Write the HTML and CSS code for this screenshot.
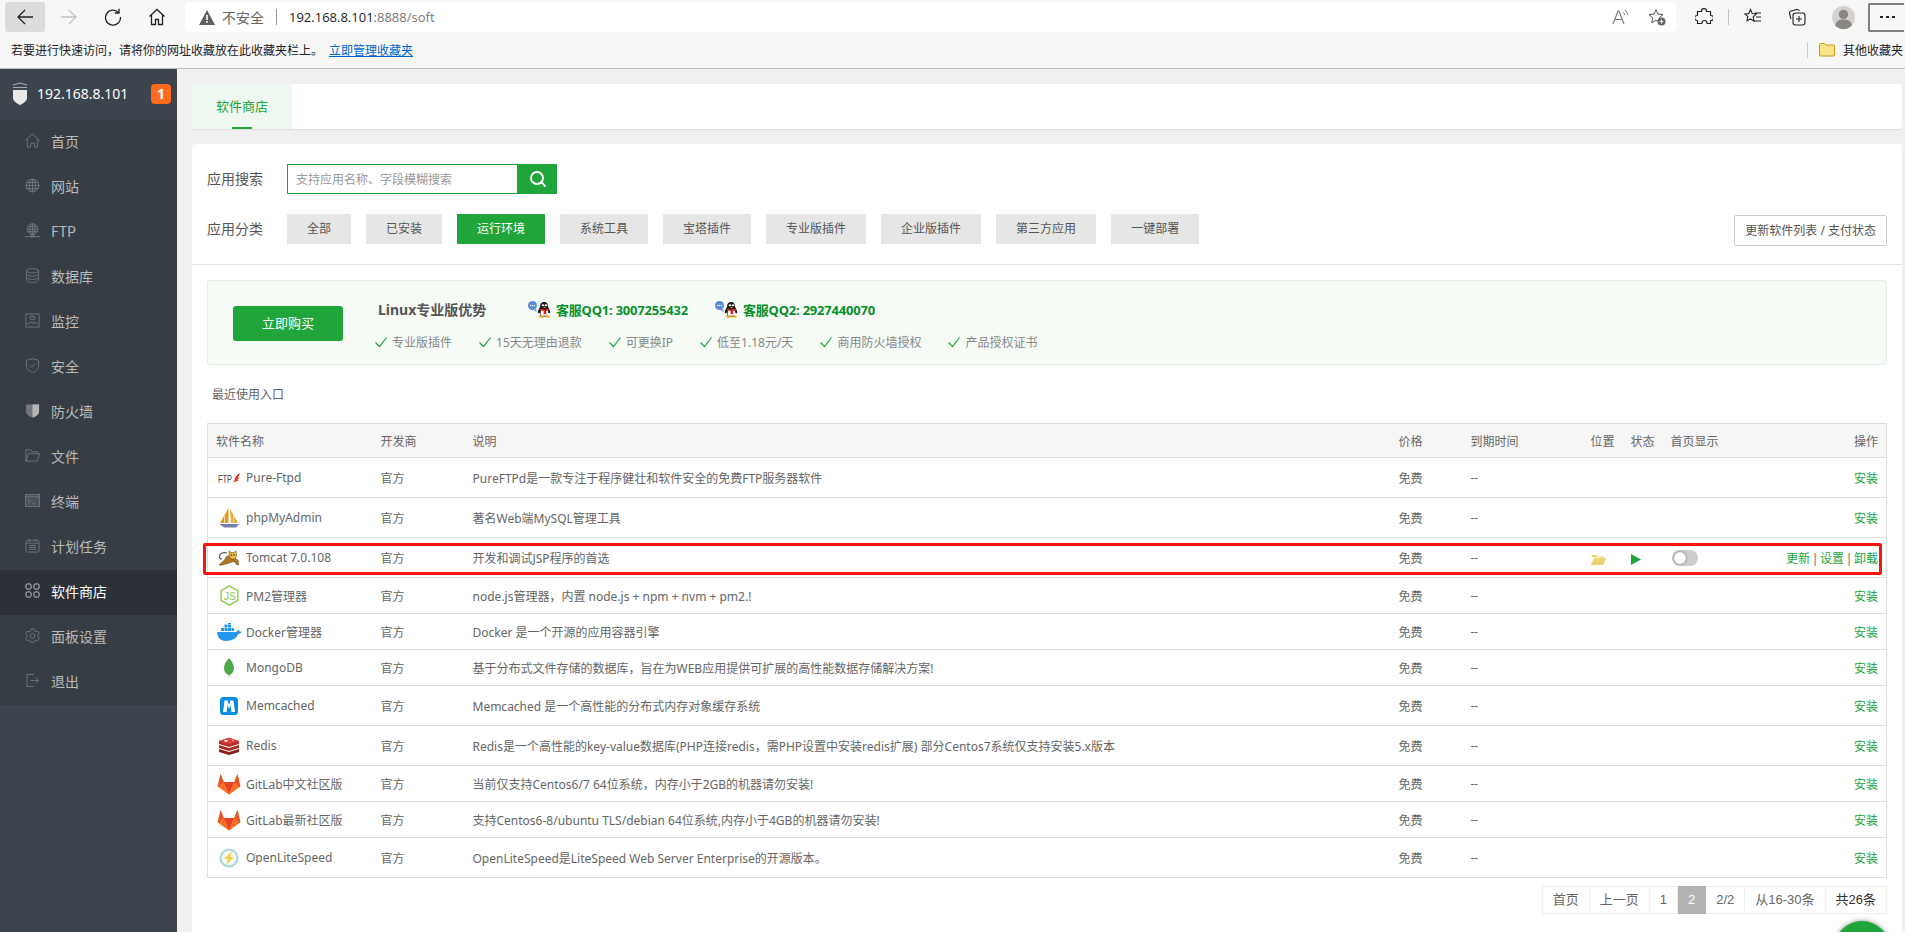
FILE: index.html
```html
<!DOCTYPE html>
<html lang="zh">
<head>
    <meta charset="utf-8">
    <title>软件商店</title>
    <link rel="stylesheet" href="styles.css">
</head>
<body>
    <svg class="defs" width="0" height="0">
        <symbol id="gitlab" viewBox="0 0 24 22">
            <path d="M12 21.500 0.600 13.200 3.600 1l3.200 8h10.400l3.200-8 3 12.200z" fill="#fca326"/>
            <path d="M12 21.500 6.800 9h10.400z" fill="#e24329"/>
            <path d="M6.800 9 3.600 1 0.600 13.200 2 14.200z" fill="#e8552a"/>
            <path d="M17.200 9 20.400 1l3 12.200-1.400 1z" fill="#e8552a"/>
            <path d="M12 21.500 2 14.200 6.800 9zM12 21.500 22 14.200 17.200 9z" fill="#fc6d26"/>
        </symbol>
        <symbol id="qq" viewBox="0 0 24 17">
            <circle cx="4.500" cy="4.500" r="4.500" fill="#5b8bd8"/>
            <path d="M5 8.500l3.500 0 0 2.500z" fill="#5b8bd8"/>
            <circle cx="2.600" cy="4.500" r=".7" fill="#fff"/><circle cx="4.500" cy="4.500" r=".7" fill="#fff"/><circle cx="6.400" cy="4.500" r=".7" fill="#fff"/>
            <g transform="translate(1.600 -.44) scale(.875 .72)">
                <path d="M17 2c-3.600 0-5 3-5 6 0 2-3 6-2.500 9 .5 1.500 2 0 2.500-.5V22h9v-5.500c.5.500 2 2 2.500.5.500-3-2.500-7-2.500-9 0-3-1.400-6-4-6z" fill="#1a1a1a"/>
                <path d="M13 12c2 1.500 6 1.500 8 0l.5 9h-9z" fill="#fff"/>
                <path d="M12 11.500c3 1.500 7 1.500 10 0v2c-1 .5-2 .8-3 .8V19h-3v-4.700c-1.500 0-3-.3-4-.8z" fill="#e0201c"/>
                <path d="M11 21h5v2.500h-5zM18 21h5v2.500h-5z" fill="#f0a010"/>
                <circle cx="15.300" cy="6.500" r="1.500" fill="#fff"/><circle cx="18.700" cy="6.500" r="1.500" fill="#fff"/>
                <path d="M15 9h4l-2 1.800z" fill="#f0a010"/>
            </g>
        </symbol>
        <symbol id="check" viewBox="0 0 14 14">
            <path d="M1.500 7.500 5.500 11.500 12.500 2.500" fill="none" stroke="#20a53a" stroke-width="1.200"/>
        </symbol>
    </svg>

    <header class="browser">
        <div class="toolbar">
            <div class="tool tool-back">
                <svg width="18" height="18" viewBox="0 0 18 18"><path d="M17 9H2M9 2 2 9l7 7" fill="none" stroke="#222" stroke-width="1.300"/></svg>
            </div>
            <div class="tool">
                <svg width="18" height="18" viewBox="0 0 18 18"><path d="M1 9h15M9 2l7 7-7 7" fill="none" stroke="#c4c4c4" stroke-width="1.300"/></svg>
            </div>
            <div class="tool">
                <svg width="18" height="18" viewBox="0 0 18 18"><path d="M14.500 4.500A7.500 7.500 0 1 0 16.500 9M15 .8v4.200h-4.200" fill="none" stroke="#222" stroke-width="1.300"/></svg>
            </div>
            <div class="tool">
                <svg width="18" height="18" viewBox="0 0 18 18"><path d="M1.500 8.500 9 1.500l7.500 7M3.500 7v9.500h4v-5h3v5h4V7" fill="none" stroke="#222" stroke-width="1.300"/></svg>
            </div>
            <div class="address">
                <svg class="warn" width="16" height="15" viewBox="0 0 16 15"><path d="M8 0 16 15H0z" fill="#5f5f5f"/><path d="M7.200 5h1.600v5H7.200zM7.200 11h1.600v1.700H7.200z" fill="#fff"/></svg>
                <span class="insecure">不安全</span>
                <span class="address-sep"></span>
                <span class="url">192.168.8.101<span class="url-dim">:8888/soft</span></span>
                <svg class="read-icon" width="18" height="16" viewBox="0 0 18 16"><path d="M1 15 6 2h1l5 13M3 10.500h7" fill="none" stroke="#777" stroke-width="1.100"/><path d="M11 3c1 .7 1.500 1.700 1.500 3M13 1c1.700 1.100 2.500 3 2.500 5" fill="none" stroke="#777"/></svg>
                <svg class="star-icon" width="18" height="18" viewBox="0 0 18 18"><path d="M8 1.500l2 4.600 5 .5-3.700 3.300 1 4.900L8 12.300l-4.300 2.500 1-4.900L1 6.600l5-.5z" fill="none" stroke="#555"/><circle cx="13.500" cy="13.500" r="4" fill="#666"/><path d="M11.500 13.500h4M13.500 11.500v4" stroke="#fff"/></svg>
            </div>
            <div class="tool tool-first">
                <svg width="18" height="18" viewBox="0 0 18 18"><path d="M6.500 3.200a2.500 2.500 0 0 1 5 0c0 .3 0 .3.300.3h3.700v3.700c0 .3.200.3.500.3a2.500 2.500 0 0 1 0 5c-.3 0-.5 0-.5.300v2.700h-3.200c-.3 0-.3-.2-.3-.5a2.500 2.500 0 0 0-5 0c0 .3 0 .5-.3.500H2.500v-2.700c0-.3-.2-.3-.5-.3a2.500 2.500 0 0 1 0-5c.3 0 .5 0 .5-.3V3.500h3.700c.3 0 .3 0 .3-.3z" fill="none" stroke="#222" stroke-width="1.200"/></svg>
            </div>
            <span class="tool-sep"></span>
            <div class="tool">
                <svg width="18" height="18" viewBox="0 0 18 18"><path d="M6.500 1.500l1.700 4 4 .5-3 2.900.8 4.300-3.500-2.200L3 12.700l.8-4.300L.8 6l4-.5zM11 5h6M12 9h5M10.500 13H17" fill="none" stroke="#222" stroke-width="1.100"/></svg>
            </div>
            <div class="tool">
                <svg width="18" height="18" viewBox="0 0 18 18"><path d="M3 11 1.500 5.500A2 2 0 0 1 3 3l6-1.500c1-.2 2 .3 2.300 1.500" fill="none" stroke="#222" stroke-width="1.100"/><rect x="5" y="5" width="12" height="12" rx="2.500" fill="none" stroke="#222" stroke-width="1.100"/><path d="M11 8v6M8 11h6" stroke="#222" stroke-width="1.100"/></svg>
            </div>
            <div class="tool tool-user">
                <div class="avatar">
                    <svg width="23" height="23" viewBox="0 0 22 22"><circle cx="11" cy="8" r="4.500" fill="#8a8682"/><path d="M3 19c1-5 4-6 8-6s7 1 8 6a11 11 0 0 1-16 0z" fill="#8a8682"/></svg>
                </div>
            </div>
            <div class="more"><i></i><i></i><i></i></div>
        </div>
        <div class="bookmarks">
            <span>若要进行快速访问，请将你的网址收藏放在此收藏夹栏上。</span>
            <a class="bookmarks-link" href="#">立即管理收藏夹</a>
            <span class="bookmarks-sep"></span>
            <svg width="16" height="14" viewBox="0 0 16 14"><path d="M.5 12V1.500a1 1 0 0 1 1-1h4l1.500 1.500h7.500a1 1 0 0 1 1 1V12a1 1 0 0 1-1 1h-13a1 1 0 0 1-1-1z" fill="#fbe38a" stroke="#c79a10"/></svg>
            <span class="bookmarks-other">其他收藏夹</span>
        </div>
    </header>

    <div class="app">
        <aside class="sidebar">
            <div class="side-head">
                <svg width="16" height="24" viewBox="0 0 16 24"><path d="M1 3l7-2 7 2M1 5.500h14" fill="none" stroke="#aab" stroke-width="1.200"/><path d="M1 8h14v8c0 3-4 5.500-7 7-3-1.500-7-4-7-7z" fill="#e8e8e8"/></svg>
                <span class="side-ip">192.168.8.101</span>
                <span class="side-badge">1</span>
            </div>
            <nav class="side-nav">
                <a class="side-item" href="#">
                    <svg viewBox="0 0 16 16"><path d="M.5 8 8 1l7.500 7M2.500 7v8h3.500v-4h4v4h3.500V7"/></svg>首页
                </a>
                <a class="side-item" href="#">
                    <svg viewBox="0 0 16 16"><circle cx="8" cy="8" r="6.800"/><ellipse cx="8" cy="8" rx="3.200" ry="6.800"/><path d="M8 1.200v13.600M1.200 8h13.600M2 4.800h12M2 11.200h12"/></svg>网站
                </a>
                <a class="side-item" href="#">
                    <svg viewBox="0 0 16 16"><circle cx="8" cy="6.500" r="5.700"/><ellipse cx="8" cy="6.500" rx="2.600" ry="5.700"/><path d="M8 1v11M2.300 6.500h11.400M3 3.800h10M3 9.200h10M0 14.500h16M6 13h4v2H6z"/></svg>FTP
                </a>
                <a class="side-item" href="#">
                    <svg viewBox="0 0 16 16"><ellipse cx="8" cy="3" rx="6.500" ry="2.300"/><path d="M1.500 3v10c0 1.300 3 2.300 6.500 2.300s6.500-1 6.500-2.300V3M1.500 6.400c0 1.300 3 2.300 6.500 2.300s6.500-1 6.500-2.300M1.500 9.800c0 1.300 3 2.300 6.500 2.300s6.500-1 6.500-2.300"/></svg>数据库
                </a>
                <a class="side-item" href="#">
                    <svg viewBox="0 0 16 16"><rect x="1" y="1" width="14" height="14"/><path d="M2 11h3l1.500-2 1.500 2.500L9.500 9l1 2H14M5.500 3.500h5v3h-5z"/></svg>监控
                </a>
                <a class="side-item" href="#">
                    <svg viewBox="0 0 16 16"><path d="M8 .8 14.500 2.500V9c0 3-3.500 5.500-6.500 6.500C5 14.500 1.500 12 1.500 9V2.500zM4.800 7.500l2.400 2.400 4-4"/></svg>安全
                </a>
                <a class="side-item" href="#">
                    <svg viewBox="0 0 16 16"><path class="fill-half" d="M1 1.500h14V9c0 3-3.500 5.500-7 6.500C4.500 14.500 1 12 1 9z"/><path class="fill-solid" d="M8 1.500h7V9c0 3-3.500 5.500-7 6.500z"/></svg>防火墙
                </a>
                <a class="side-item" href="#">
                    <svg viewBox="0 0 16 16"><path d="M1 14V2h5l1.500 2h6v2M1 14l2.500-8h12L13 14z"/></svg>文件
                </a>
                <a class="side-item" href="#">
                    <svg viewBox="0 0 16 16"><rect x=".5" y="1.500" width="15" height="13" class="fill-dim"/><path d="M.5 4h15M3 7l3 2-3 2M7.500 11.500h4"/></svg>终端
                </a>
                <a class="side-item" href="#">
                    <svg viewBox="0 0 16 16"><rect x="1" y="2.500" width="14" height="12.500" rx="1.500"/><path d="M1 5.500h14M4.500 .8v3M11.500 .8v3M4 8h8M4 10h8M4 12h8"/></svg>计划任务
                </a>
                <a class="side-item side-item-active" href="#">
                    <svg viewBox="0 0 16 16"><rect x="1" y="1" width="5.500" height="5.500" rx="1.500"/><rect x="9.500" y="1" width="5.500" height="5.500" rx="1.500"/><rect x="1" y="9.500" width="5.500" height="5.500" rx="1.500"/><rect x="9.500" y="9.500" width="5.500" height="5.500" rx="1.500"/></svg>软件商店
                </a>
                <a class="side-item" href="#">
                    <svg viewBox="0 0 16 16"><path d="M6.500 1h3l.5 2 1.800 1 2-.6 1.500 2.600-1.500 1.500v1.800l1.500 1.500-1.500 2.600-2-.6-1.800 1-.5 2h-3l-.5-2-1.800-1-2 .6L.7 10.800l1.500-1.500V7.500L.7 6 2.200 3.400l2 .6L6 3z"/><circle cx="8" cy="8.400" r="2.500"/></svg>面板设置
                </a>
                <a class="side-item" href="#">
                    <svg viewBox="0 0 16 16"><path d="M9.500 1.500h-7.500v13h7.500M6 8h8.500M11.500 5l3 3-3 3"/></svg>退出
                </a>
            </nav>
        </aside>

        <main class="main">
            <div class="tabs">
                <div class="tab">软件商店</div>
            </div>

            <section class="store">
                <div class="filters">
                    <div class="filter-row">
                        <span class="filter-label">应用搜索</span>
                        <div class="search">
                            <input class="search-input" type="text" placeholder="支持应用名称、字段模糊搜索">
                            <span class="search-btn">
                                <svg width="18" height="18" viewBox="0 0 18 18"><circle cx="8" cy="8" r="6" fill="none" stroke="#fff" stroke-width="1.800"/><path d="M12.500 12.500 16.500 16.500" stroke="#fff" stroke-width="1.800"/></svg>
                            </span>
                        </div>
                    </div>
                    <div class="filter-row filter-row-cats">
                        <span class="filter-label">应用分类</span>
                        <span class="cat">全部</span>
                        <span class="cat">已安装</span>
                        <span class="cat cat-active">运行环境</span>
                        <span class="cat">系统工具</span>
                        <span class="cat">宝塔插件</span>
                        <span class="cat">专业版插件</span>
                        <span class="cat">企业版插件</span>
                        <span class="cat">第三方应用</span>
                        <span class="cat">一键部署</span>
                        <span class="refresh">更新软件列表 / 支付状态</span>
                    </div>
                </div>

                <div class="content">
                    <div class="promo">
                        <a class="buy" href="#">立即购买</a>
                        <div class="promo-body">
                            <div class="promo-top">
                                <span class="promo-title">Linux专业版优势</span>
                                <span class="qq"><svg width="24" height="17"><use href="#qq"/></svg>客服QQ1: 3007255432</span>
                                <span class="qq"><svg width="24" height="17"><use href="#qq"/></svg>客服QQ2: 2927440070</span>
                            </div>
                            <div class="promo-features">
                                <span class="feature"><svg width="14" height="14"><use href="#check"/></svg>专业版插件</span>
                                <span class="feature"><svg width="14" height="14"><use href="#check"/></svg>15天无理由退款</span>
                                <span class="feature"><svg width="14" height="14"><use href="#check"/></svg>可更换IP</span>
                                <span class="feature"><svg width="14" height="14"><use href="#check"/></svg>低至1.18元/天</span>
                                <span class="feature"><svg width="14" height="14"><use href="#check"/></svg>商用防火墙授权</span>
                                <span class="feature"><svg width="14" height="14"><use href="#check"/></svg>产品授权证书</span>
                            </div>
                        </div>
                    </div>

                    <div class="recent">最近使用入口</div>

                    <div class="table-wrap">
                        <table class="soft-table">
                            <colgroup>
                                <col class="col-name"><col class="col-dev"><col class="col-desc"><col class="col-price">
                                <col class="col-expire"><col class="col-loc"><col class="col-state"><col class="col-home"><col class="col-op">
                            </colgroup>
                            <thead>
                                <tr>
                                    <th>软件名称</th><th>开发商</th><th>说明</th><th>价格</th><th>到期时间</th><th>位置</th><th>状态</th><th>首页显示</th><th class="op">操作</th>
                                </tr>
                            </thead>
                            <tbody>
                                <tr class="row-tall">
                                    <td><div class="soft"><span class="logo"><svg width="24" height="14" viewBox="0 0 24 14"><text x="1" y="11.500" class="ftp-text" textLength="14" lengthAdjust="spacingAndGlyphs">FTP</text><path d="M23 2c-2.500 1-5 4-5.500 7l-1.500 3 2-1.500c2.500 0 3.500-1.500 3.500-1.500h-1.500l2.500-2h-1.500z" fill="#d8352a"/></svg></span>Pure-Ftpd</div></td>
                                    <td>官方</td><td>PureFTPd是一款专注于程序健壮和软件安全的免费FTP服务器软件</td><td>免费</td><td>--</td><td></td><td></td><td></td><td class="op"><a class="link" href="#">安装</a></td>
                                </tr>
                                <tr class="row-tall">
                                    <td><div class="soft"><span class="logo"><svg width="20" height="20" viewBox="0 0 20 20"><path d="M9.500 0 1 15h8.500z" fill="#e39c26"/><path d="M11 1l8 14h-7z" fill="#e8aa3c"/><path d="M5 8h1v7H5zM14 6h1v9h-1z" fill="#f4d9a0"/><path d="M0 16h20l-3 3.500H5z" fill="#7a7fa8"/></svg></span>phpMyAdmin</div></td>
                                    <td>官方</td><td>著名Web端MySQL管理工具</td><td>免费</td><td>--</td><td></td><td></td><td></td><td class="op"><a class="link" href="#">安装</a></td>
                                </tr>
                                <tr class="row-tall">
                                    <td><div class="soft"><span class="logo"><svg width="22" height="16" viewBox="0 0 22 16"><path d="M9 3C5 2 1.500 3.500 1.500 6.500c0 1.500 1 2.500 2.500 2.500" fill="none" stroke="#555" stroke-width="1.200"/><path d="M1 15l5-4.500 3-4.500 5 1 6 3 .5 5-2-.5-2-3-4 1-5 1.500-3 1z" fill="#b07a20" stroke="#4a3a10" stroke-width=".5"/><path d="M11 1l2 1.500h3L18 1l.5 5-1.500 3h-4l-2-3z" fill="#f0c040" stroke="#6a4a10" stroke-width=".6"/><circle cx="13.500" cy="5" r=".8" fill="#222"/><circle cx="16" cy="5" r=".8" fill="#222"/></svg></span>Tomcat 7.0.108</div></td>
                                    <td>官方</td><td>开发和调试JSP程序的首选</td><td>免费</td><td>--</td>
                                    <td><svg class="folder" width="15" height="11" viewBox="0 0 15 11"><path d="M1 3V1h4.500l1 1.500H13V4H3.500L0 11h12l3-7" fill="#eed46c"/><path d="M3 4h12l-3 7H0z" fill="#eed46c"/></svg></td>
                                    <td><svg class="play" width="10" height="11" viewBox="0 0 10 11"><path d="M0 0 10 5.500 0 11z" fill="#20a53a"/></svg></td>
                                    <td><span class="switch"><i></i></span></td>
                                    <td class="op"><a class="link" href="#">更新</a> | <a class="link" href="#">设置</a> | <a class="link" href="#">卸载</a></td>
                                </tr>
                                <tr>
                                    <td><div class="soft"><span class="logo"><svg width="19" height="21" viewBox="0 0 18 20"><path d="M9 .8 17 5.300v9.400L9 19.200 1 14.700V5.300z" fill="none" stroke="#8cc84b" stroke-width="1.300"/><text x="3.500" y="14" class="js-text">JS</text></svg></span>PM2管理器</div></td>
                                    <td>官方</td><td>node.js管理器，内置 node.js + npm + nvm + pm2.!</td><td>免费</td><td>--</td><td></td><td></td><td></td><td class="op"><a class="link" href="#">安装</a></td>
                                </tr>
                                <tr>
                                    <td><div class="soft"><span class="logo"><svg width="25" height="18" viewBox="0 0 25 18"><path d="M0 9h19c1-.2 1.500-1 1.500-2 1 .2 2 .8 2.300 1.500l2 .3c-1 1.500-2 2-3.500 2C20 15 15 18 9 18 3 18 .5 14 0 9z" fill="#2496ed"/><path d="M4 5h3v3H4zM7.500 5h3v3h-3zM11 5h3v3h-3zM14.500 5h2.500v3h-2.500zM7.500 1.500h3v3h-3zM11 1.500h3v3h-3zM11-1h3v2h-3z" fill="#2496ed"/></svg></span>Docker管理器</div></td>
                                    <td>官方</td><td>Docker 是一个开源的应用容器引擎</td><td>免费</td><td>--</td><td></td><td></td><td></td><td class="op"><a class="link" href="#">安装</a></td>
                                </tr>
                                <tr>
                                    <td><div class="soft"><span class="logo"><svg width="10" height="20" viewBox="0 0 10 20"><path d="M5 0c2.500 3 5 6 5 10s-2.500 6-4.500 7L5 20l-.5-3C2.500 16 0 14 0 10S2.500 3 5 0z" fill="#4fa94a"/></svg></span>MongoDB</div></td>
                                    <td>官方</td><td>基于分布式文件存储的数据库，旨在为WEB应用提供可扩展的高性能数据存储解决方案!</td><td>免费</td><td>--</td><td></td><td></td><td></td><td class="op"><a class="link" href="#">安装</a></td>
                                </tr>
                                <tr class="row-tall">
                                    <td><div class="soft"><span class="logo"><svg width="18" height="18" viewBox="0 0 18 18"><rect width="18" height="18" rx="3.500" fill="#0a8ee0"/><path d="M3 15 4.500 3.500h3L9 8l1.500-4.500h3L15 15h-3.500L10.500 8 9 12 7.500 8l-1 7z" fill="#fff"/></svg></span>Memcached</div></td>
                                    <td>官方</td><td>Memcached 是一个高性能的分布式内存对象缓存系统</td><td>免费</td><td>--</td><td></td><td></td><td></td><td class="op"><a class="link" href="#">安装</a></td>
                                </tr>
                                <tr class="row-tall">
                                    <td><div class="soft"><span class="logo"><svg width="20" height="18" viewBox="0 0 20 18"><path d="M0 12v3l10 3 10-3v-3l-10 3z" fill="#8f1f1a"/><path d="M0 8v3l10 3 10-3V8l-10 3z" fill="#a82a22"/><path d="M0 4v3l10 3 10-3V4L10 1z" fill="#b8302a"/><path d="M0 4l10-3.500L20 4l-10 3z" fill="#d9443a"/><ellipse cx="7" cy="3.800" rx="2" ry=".9" fill="#fff"/><path d="M12 2l1 1 2-.5-1 1.500z" fill="#fff"/></svg></span>Redis</div></td>
                                    <td>官方</td><td>Redis是一个高性能的key-value数据库(PHP连接redis，需PHP设置中安装redis扩展) 部分Centos7系统仅支持安装5.x版本</td><td>免费</td><td>--</td><td></td><td></td><td></td><td class="op"><a class="link" href="#">安装</a></td>
                                </tr>
                                <tr>
                                    <td><div class="soft"><span class="logo"><svg width="24" height="22"><use href="#gitlab"/></svg></span>GitLab中文社区版</div></td>
                                    <td>官方</td><td>当前仅支持Centos6/7 64位系统，内存小于2GB的机器请勿安装!</td><td>免费</td><td>--</td><td></td><td></td><td></td><td class="op"><a class="link" href="#">安装</a></td>
                                </tr>
                                <tr>
                                    <td><div class="soft"><span class="logo"><svg width="24" height="22"><use href="#gitlab"/></svg></span>GitLab最新社区版</div></td>
                                    <td>官方</td><td>支持Centos6-8/ubuntu TLS/debian 64位系统,内存小于4GB的机器请勿安装!</td><td>免费</td><td>--</td><td></td><td></td><td></td><td class="op"><a class="link" href="#">安装</a></td>
                                </tr>
                                <tr class="row-tall">
                                    <td><div class="soft"><span class="logo"><svg width="20" height="20" viewBox="0 0 20 20"><circle cx="10" cy="10" r="8.500" fill="#f2f8f8" stroke="#a9d6d6" stroke-width="2"/><path d="M13 3 5 11h4l-2 6 8-8h-4z" fill="#f4d03f"/></svg></span>OpenLiteSpeed</div></td>
                                    <td>官方</td><td>OpenLiteSpeed是LiteSpeed Web Server Enterprise的开源版本。</td><td>免费</td><td>--</td><td></td><td></td><td></td><td class="op"><a class="link" href="#">安装</a></td>
                                </tr>
                            </tbody>
                        </table>
                        <div class="mark"></div>
                    </div>

                    <div class="pager">
                        <a href="#">首页</a><a href="#">上一页</a><a href="#">1</a><span class="pager-on">2</span><span>2/2</span><span>从16-30条</span><span class="pager-total">共26条</span>
                    </div>
                </div>
            </section>
            <div class="float-btn"></div>
        </main>
    </div>
</body>
</html>
```
FILE: styles.css
```css
/* page base */
* {
    box-sizing: border-box;
}

html, body {
    height: 100%;
}

body {
    margin: 0;
    height: 932px;
    overflow: hidden;
    display: flex;
    flex-direction: column;
    font-family: "Noto Sans", "Noto Sans CJK SC", sans-serif;
    font-size: 12px;
    color: #666;
    background-color: #f0f0f0;
}

a {
    text-decoration: none;
}

.defs {
    position: absolute;
}

/* browser bars */
.browser {
    flex: none;
    height: 69px;
    background-color: #f7f7f7;
    border-bottom: 1px solid #bdbdbd;
}

.toolbar {
    display: flex;
    align-items: center;
    height: 34px;
    padding: 2px 0 2px 5px;
}

.tool {
    width: 44px;
    height: 30px;
    display: flex;
    align-items: center;
    justify-content: center;
    flex: none;
}

.tool-back {
    width: 40px;
    margin-right: 2px;
    background-color: #dcdcdc;
    border-radius: 3px;
}

.tool-first {
    margin-left: 6px;
}

.tool-user {
    margin-left: 2px;
}

.tool-sep {
    width: 1px;
    height: 16px;
    margin: 0 2px;
    background-color: #c4c4c4;
}

.address {
    flex: none;
    width: 1491px;
    height: 30px;
    margin-left: 6px;
    padding: 0 10px 0 14px;
    display: flex;
    align-items: center;
    background-color: #fff;
    border-radius: 5px;
    font-family: "Open Sans", "Noto Sans CJK SC", sans-serif;
    font-size: 13px;
}

.insecure {
    margin-left: 7px;
    font-size: 14px;
    color: #666;
}

.address-sep {
    width: 1px;
    height: 16px;
    margin: 0 12px;
    background-color: #999;
}

.url {
    color: #222;
}

.url-dim {
    color: #777;
}

.read-icon {
    margin-left: auto;
    margin-right: 18px;
}

.avatar {
    width: 23px;
    height: 23px;
    border-radius: 50%;
    overflow: hidden;
    background-color: #d4d2d0;
}

.more {
    width: 36px;
    height: 29px;
    margin-left: 3px;
    display: flex;
    align-items: center;
    justify-content: center;
    gap: 3px;
    border: 2px solid #808080;
    border-right: 0;
    border-radius: 2px 0 0 2px;
}

.more i {
    width: 3px;
    height: 2px;
    background-color: #222;
}

.bookmarks {
    display: flex;
    align-items: center;
    height: 34px;
    padding: 0 2px 3px 11px;
    color: #222;
    font-family: "Noto Sans CJK SC", sans-serif;
    font-size: 12px;
}

.bookmarks-link {
    margin-left: 6px;
    color: #0066cc;
    text-decoration: underline;
}

.bookmarks-sep {
    width: 1px;
    height: 16px;
    margin-left: auto;
    margin-right: 11px;
    background-color: #ccc;
}

.bookmarks-other {
    margin-left: 8px;
}

/* sidebar */
.app {
    flex: 1;
    display: flex;
    min-height: 0;
}

.sidebar {
    flex: none;
    width: 177px;
    background-color: #3c444d;
    color: #bbb;
}

.side-head {
    height: 51px;
    display: flex;
    align-items: center;
    padding: 0 6px 2px 12px;
    color: #fff;
    font-size: 14px;
}

.side-ip {
    margin-left: 9px;
}

.side-badge {
    width: 20px;
    height: 20px;
    margin-left: auto;
    border-radius: 4px;
    background-color: #ff6a1f;
    font-weight: bold;
    line-height: 20px;
    text-align: center;
}

.side-nav {
    background-color: #363d44;
}

.side-item {
    display: flex;
    align-items: center;
    height: 45px;
    padding: 0 0 4px 25px;
    color: #bbb;
    font-family: "Noto Sans CJK SC", sans-serif;
    font-size: 14px;
}

.side-item svg {
    width: 15px;
    height: 15px;
    margin-right: 11px;
    flex: none;
    fill: none;
    stroke: #6f767d;
    stroke-width: 1;
}

.side-item-active {
    background-color: #2c3138;
    color: #fff;
}

.side-item-active svg {
    stroke: #cfcfcf;
}

.side-item .fill-half {
    fill: #6f767d;
    stroke: none;
}

.side-item .fill-solid {
    fill: #b5b5b5;
    stroke: none;
}

.side-item .fill-dim {
    fill: #4b5258;
}

/* main column */
.main {
    position: relative;
    flex: 1;
    min-width: 0;
    display: flex;
    flex-direction: column;
    padding: 15px 3px 0 15px;
}

.tabs {
    flex: none;
    height: 45px;
    background-color: #fff;
    border-radius: 4px;
    box-shadow: 0 1px 1px #ddd;
}

.tab {
    position: relative;
    width: 100px;
    height: 45px;
    line-height: 45px;
    text-align: center;
    font-size: 13px;
    color: #20a53a;
    background-color: #eef7f0;
    border-radius: 4px 0 0 4px;
}

.tab::after {
    content: "";
    position: absolute;
    left: 40px;
    bottom: 0;
    width: 20px;
    height: 2px;
    background-color: #20a53a;
}

.store {
    flex: 1;
    margin-top: 15px;
    background-color: #fff;
    border-radius: 4px 4px 0 0;
}

.filters {
    height: 121px;
    padding: 20px 15px 0;
    border-bottom: 1px solid #e4e4e4;
}

.filter-row {
    display: flex;
    align-items: center;
}

.filter-row-cats {
    margin-top: 20px;
    gap: 15px;
    align-items: flex-start;
}

.filter-label {
    width: 80px;
    flex: none;
    font-size: 14px;
    line-height: 30px;
    color: #555;
}

.filter-row-cats .filter-label {
    width: 65px;
}

.search {
    display: flex;
    height: 30px;
}

.search-input {
    width: 231px;
    height: 30px;
    padding: 0 8px;
    border: 1px solid #20a53a;
    outline: 0;
    font: inherit;
}

.search-input::placeholder {
    color: #999;
}

.search-btn {
    width: 39px;
    display: flex;
    align-items: center;
    justify-content: center;
    background-color: #20a53a;
}

.cat {
    height: 30px;
    padding: 0 20px;
    line-height: 30px;
    color: #555;
    background-color: #e6e6e6;
    white-space: nowrap;
}

.cat-active {
    color: #fff;
    background-color: #20a53a;
}

.refresh {
    height: 31px;
    margin: 1px 0 0 auto;
    padding: 0 10px;
    line-height: 29px;
    color: #555;
    border: 1px solid #ccc;
    border-radius: 2px;
}

.content {
    padding: 15px 15px 0;
}

/* promo banner */
.promo {
    display: flex;
    height: 85px;
    background-color: #f6fbf6;
    border: 1px solid #e3efe8;
    border-radius: 3px;
}

.buy {
    width: 110px;
    height: 35px;
    margin: 25px 35px 0 25px;
    line-height: 35px;
    text-align: center;
    font-size: 13px;
    color: #fff;
    background-color: #20a53a;
    border-radius: 3px;
}

.promo-top {
    display: flex;
    align-items: center;
    height: 28px;
    margin-top: 14px;
}

.promo-title {
    width: 150px;
    font-size: 14px;
    font-weight: bold;
    color: #555;
}

.qq {
    display: flex;
    align-items: center;
    gap: 4px;
    width: 187px;
    font-size: 13px;
    font-weight: bold;
    letter-spacing: -0.2px;
    color: #0a8f2a;
}

.promo-features {
    display: flex;
    gap: 26px;
    margin: 10px 0 0 -4px;
}

.feature {
    display: flex;
    align-items: center;
    gap: 4px;
    color: #888;
}

/* software table */
.recent {
    margin: 21px 0 19px 5px;
    height: 18px;
    line-height: 18px;
    color: #666;
}

.table-wrap {
    position: relative;
}

.soft-table {
    width: 100%;
    table-layout: fixed;
    border-collapse: collapse;
    border: 1px solid #ddd;
}

.soft-table th,
.soft-table td {
    padding: 0 8px;
    text-align: left;
    font-weight: normal;
    color: #666;
    white-space: nowrap;
}

.soft-table th {
    height: 34px;
    background-color: #f6f6f6;
    border-bottom: 1px solid #ddd;
}

.soft-table td {
    height: 36px;
    border-bottom: 1px solid #ddd;
}

.soft-table .row-tall td {
    height: 40px;
}

.soft-table .op {
    text-align: right;
    word-spacing: -1.5px;
}

.col-name { width: 165px; }
.col-dev { width: 92px; }
.col-desc { width: 926px; }
.col-price { width: 72px; }
.col-expire { width: 120px; }
.col-loc { width: 40px; }
.col-state { width: 40px; }
.col-home { width: 108px; }

.soft {
    display: flex;
    align-items: center;
    gap: 4px;
}

.logo {
    width: 26px;
    display: flex;
    justify-content: center;
}

.ftp-text {
    font-family: "Liberation Sans", sans-serif;
    font-size: 11px;
    fill: #444;
}

.js-text {
    font-family: "Liberation Sans", sans-serif;
    font-size: 10px;
    fill: #8cc84b;
}

.link {
    color: #20a53a;
}

.folder,
.play {
    display: block;
    margin-top: 4px;
}

.switch {
    display: block;
    width: 26px;
    height: 16px;
    margin: 0 0 0 1px;
    padding: 2px;
    background-color: #ccc;
    border-radius: 8px;
}

.switch i {
    display: block;
    width: 12px;
    height: 12px;
    background-color: #fff;
    border-radius: 50%;
    box-shadow: 0 0 2px #555;
}

/* red note box drawn over the tomcat row */
.mark {
    position: absolute;
    left: -4px;
    right: 5px;
    top: 120px;
    height: 32px;
    border: 3px solid #f5160e;
    border-radius: 2px;
}

.pager {
    display: flex;
    justify-content: flex-end;
    margin-top: 8px;
    font-family: "Liberation Sans", "Noto Sans CJK SC", sans-serif;
}

.pager a,
.pager span {
    height: 28px;
    padding: 0 10px;
    line-height: 26px;
    font-size: 13px;
    color: #666;
    border: 1px solid #eee;
    border-left: 0;
}

.pager a:first-child {
    border-left: 1px solid #eee;
}

.pager .pager-on {
    color: #fff;
    background-color: #b3b3b3;
    border-color: #b3b3b3;
}

.pager .pager-total {
    color: #333;
}

/* round button cut off at the window bottom */
.float-btn {
    position: absolute;
    right: 15px;
    top: 852px;
    width: 56px;
    height: 56px;
    background-color: #20a53a;
    border-radius: 50%;
    box-shadow: 0 0 5px #888;
}
```
